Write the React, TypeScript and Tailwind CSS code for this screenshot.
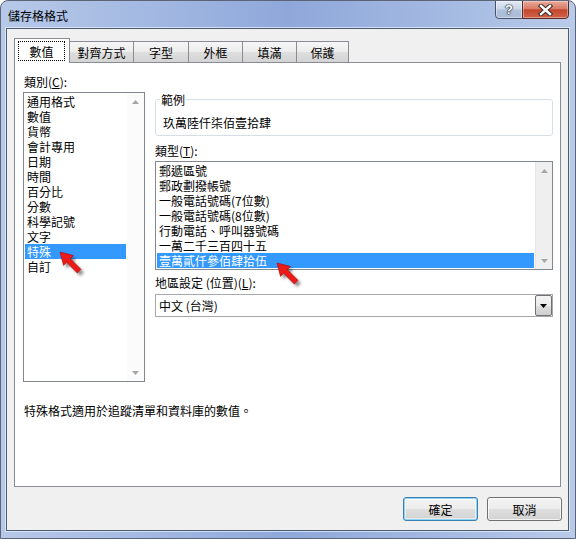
import React from "react";

const categories = [
  "通用格式",
  "數值",
  "貨幣",
  "會計專用",
  "日期",
  "時間",
  "百分比",
  "分數",
  "科學記號",
  "文字",
  "特殊",
  "自訂",
];

const types = [
  "郵遞區號",
  "郵政劃撥帳號",
  "一般電話號碼(7位數)",
  "一般電話號碼(8位數)",
  "行動電話、呼叫器號碼",
  "一萬二千三百四十五",
  "壹萬貳仟參佰肆拾伍",
];

function ScrollArrow({ down }: { down?: boolean }) {
  return (
    <svg width="7" height="4" viewBox="0 0 7 4">
      <path d={down ? "M0 0 L7 0 L3.5 4 Z" : "M3.5 0 L7 4 L0 4 Z"} fill="#a6a6a6" />
    </svg>
  );
}

function ScrollBar({ className }: { className: string }) {
  return (
    <div className={`w-[17px] flex flex-col justify-between ${className}`}>
      <div className="h-[17px] flex items-center justify-center">
        <ScrollArrow />
      </div>
      <div className="h-[17px] flex items-center justify-center">
        <ScrollArrow down />
      </div>
    </div>
  );
}

function RedArrow({ className, id }: { className: string; id: string }) {
  const pts = "2,2 15.4,5.5 12.3,8.7 22.9,19.3 19.3,22.9 8.7,12.3 5.5,15.4";
  return (
    <svg className={className} width="34" height="34" viewBox="0 0 34 34">
      <defs>
        <filter id={id} x="-30%" y="-30%" width="160%" height="160%">
          <feGaussianBlur stdDeviation="1.5" />
        </filter>
      </defs>
      <polygon points={pts} transform="translate(3,3)" fill="#000" opacity="0.45" filter={`url(#${id})`} />
      <polygon points={pts} fill="#ee1a1a" stroke="#b00000" strokeWidth="0.6" strokeLinejoin="round" />
    </svg>
  );
}

const tabGrad =
  "bg-[linear-gradient(to_bottom,#f6f6f6_0%,#ececec_50%,#dfdfdf_51%,#d3d3d3_100%)]";

export default function App() {
  return (
    <div className="relative w-[576px] h-[539px] overflow-hidden rounded-t-[8px] border border-[#5b6577] bg-[linear-gradient(90deg,#b7c9e8_0%,#a3b9e2_25%,#8fa8da_50%,#a2b8e1_75%,#b9cbe9_100%)] flex flex-col text-[12px] leading-[15px] text-black font-['Noto_Sans_CJK_TC','Noto_Sans',sans-serif]">
      {/* title bar */}
      <div className="h-[27px] flex justify-between items-start">
        <div className="pl-[7px] pt-[7px] leading-[15px]">儲存格格式</div>
        <div className="flex -mt-px mr-[6px]">
          <div className="w-[28px] h-[19px] border border-[#46536a] rounded-bl-[4px] bg-[linear-gradient(to_bottom,#e3eaf5_0%,#c9d5e8_48%,#b1c1dc_52%,#a9bad7_100%)] shadow-[inset_0_0_0_1px_rgba(255,255,255,0.45)] flex items-center justify-center">
            <span className="font-['Liberation_Sans',sans-serif] font-bold text-[13px] leading-[13px] text-white [text-shadow:0_0_1px_#1e2633,0_0_1px_#1e2633,0_0_2px_#1e2633]">
              ?
            </span>
          </div>
          <div className="-ml-px w-[47px] h-[19px] border border-[#5a2a26] rounded-br-[4px] bg-[linear-gradient(to_bottom,#e9ab9d_0%,#d97b66_45%,#c4452d_52%,#d0654b_100%)] shadow-[inset_0_0_0_1px_rgba(255,255,255,0.35)] flex items-center justify-center">
            <svg width="15" height="12" viewBox="0 0 15 12">
              <path d="M3 2 L12 10 M12 2 L3 10" stroke="#3a2a28" strokeWidth="4.4" strokeLinecap="square" />
              <path d="M3 2 L12 10 M12 2 L3 10" stroke="#ffffff" strokeWidth="2.4" strokeLinecap="square" />
            </svg>
          </div>
        </div>
      </div>

      {/* client area */}
      <div className="ml-[5px] mr-[6px] h-[503px] border border-[#4e5a6d] bg-[#f0f0f0] shadow-[0_0_0_1px_rgba(235,242,252,0.7)] flex flex-col px-[7px] pt-[9px]">
        {/* tabs */}
        <div className="h-[24px] flex items-end">
          <div className="relative z-10 -mb-px w-[56px] h-[25px] border border-b-0 border-[#898c95] bg-white pt-[2px] pl-[3px]">
            <div className="w-[47px] h-[20px] border border-dotted border-black flex items-center justify-center leading-[15px]">
              數值
            </div>
          </div>
          <div className={`w-[64px] h-[21px] border-t border-r border-[#898c95] ${tabGrad} flex items-center justify-center`}>對齊方式</div>
          <div className={`w-[55px] h-[21px] border-t border-r border-[#898c95] ${tabGrad} flex items-center justify-center`}>字型</div>
          <div className={`w-[54px] h-[21px] border-t border-r border-[#898c95] ${tabGrad} flex items-center justify-center`}>外框</div>
          <div className={`w-[54px] h-[21px] border-t border-r border-[#898c95] ${tabGrad} flex items-center justify-center`}>填滿</div>
          <div className={`w-[52px] h-[21px] border-t border-r border-[#898c95] ${tabGrad} flex items-center justify-center`}>保護</div>
        </div>

        {/* tab panel */}
        <div className="h-[425px] border border-[#898c95] bg-white flex flex-col">
          <div className="flex pl-[8px] pt-[11px]">
            {/* left column */}
            <div className="w-[122px] flex flex-col">
              <div className="pl-px whitespace-nowrap">
                類別(<span className="underline">C</span>):
              </div>
              <div className="mt-[3px] h-[290px] border border-[#828790] bg-white flex">
                <div className="flex-1 p-px">
                  {categories.map((c) => (
                    <div
                      key={c}
                      className={
                        c === "特殊"
                          ? "h-[15px] pl-[2px] whitespace-nowrap bg-[#3399ff] text-white"
                          : "h-[15px] pl-[2px] whitespace-nowrap"
                      }
                    >
                      {c}
                    </div>
                  ))}
                </div>
                <ScrollBar className="bg-[#fbfbfb]" />
              </div>
            </div>

            {/* right column */}
            <div className="ml-[10px] w-[398px] flex flex-col">
              <fieldset className="mt-[18px] border border-[#d5dfe5] rounded-[3px] min-w-0 p-0">
                <legend className="ml-[4px] px-[1px] leading-[15px]">範例</legend>
                <div className="pl-[7px] pt-[8px] pb-[5px] leading-[15px]">玖萬陸仟柒佰壹拾肆</div>
              </fieldset>

              <div className="mt-[7px] whitespace-nowrap">
                類型(<span className="underline">T</span>):
              </div>
              <div className="mt-[3px] h-[109px] border border-[#828790] bg-white flex">
                <div className="flex-1 p-px">
                  {types.map((t, i) => (
                    <div
                      key={t}
                      className={
                        i === types.length - 1
                          ? "h-[15px] pl-[2px] whitespace-nowrap bg-[#3399ff] text-white"
                          : "h-[15px] pl-[2px] whitespace-nowrap"
                      }
                    >
                      {t}
                    </div>
                  ))}
                </div>
                <ScrollBar className="bg-[#efefef] border-l border-[#e6e6e6]" />
              </div>

              <div className="mt-[5px] whitespace-nowrap">
                地區設定 (位置)(<span className="underline">L</span>):
              </div>
              <div className="mt-[4px] h-[23px] border border-[#a6a8ad] bg-white flex items-stretch">
                <div className="flex-1 pl-[3px] flex items-center">中文 (台灣)</div>
                <div className="w-[17px] border border-[#707070] rounded-[2px] bg-[linear-gradient(to_bottom,#f3f3f3_0%,#ebebeb_50%,#dddddd_51%,#cfcfcf_100%)] flex items-center justify-center">
                  <svg width="7" height="4" viewBox="0 0 7 4">
                    <path d="M0 0 L7 0 L3.5 4 Z" fill="#000" />
                  </svg>
                </div>
              </div>
            </div>
          </div>

          <div className="mt-[21px] pl-[9px] whitespace-nowrap">特殊格式適用於追蹤清單和資料庫的數值。</div>
        </div>

        {/* buttons */}
        <div className="mt-[10px] -mr-px flex justify-end gap-[9px]">
          <button className="w-[75px] h-[24px] rounded-[3px] border border-[#3c7fb1] bg-[linear-gradient(to_bottom,#f4f4f4_0%,#ececec_50%,#dedede_51%,#d2d2d2_100%)] shadow-[inset_0_0_0_1px_#8fd3f5,inset_0_0_0_2px_rgba(255,255,255,0.5)] flex items-center justify-center leading-[15px]">
            確定
          </button>
          <button className="w-[75px] h-[24px] rounded-[3px] border border-[#707070] bg-[linear-gradient(to_bottom,#f4f4f4_0%,#ececec_50%,#dedede_51%,#d2d2d2_100%)] shadow-[inset_0_0_0_1px_rgba(255,255,255,0.7)] flex items-center justify-center leading-[15px]">
            取消
          </button>
        </div>
      </div>

      <RedArrow id="ra1" className="absolute left-[57px] top-[249px] pointer-events-none" />
      <RedArrow id="ra2" className="absolute left-[274px] top-[260px] pointer-events-none" />
    </div>
  );
}
